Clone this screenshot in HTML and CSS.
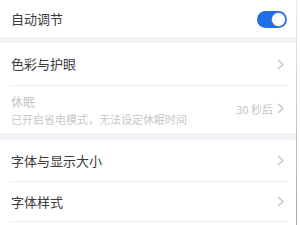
FILE: index.html
```html
<!DOCTYPE html>
<html lang="zh-CN">
<head>
<meta charset="utf-8">
<link rel="stylesheet" href="styles.css">
</head>
<body>
<div class="page">
  <div class="group">
    <div class="row row-top">
      <span class="label">自动调节</span>
      <span class="toggle"><span class="knob"></span></span>
    </div>
  </div>
  <div class="band band-1"></div>
  <div class="group">
    <div class="row row-color">
      <span class="label">色彩与护眼</span>
      <svg class="chev" width="7" height="11" viewBox="0 0 7 11"><path d="M1 1 L6 5.5 L1 10" fill="none" stroke="#c4c4c4" stroke-width="1.3"/></svg>
    </div>
    <div class="row row-sleep">
      <div class="sleep-text">
        <span class="label label-dis">休眠</span>
        <span class="sub">已开启省电模式，无法设定休眠时间</span>
      </div>
      <span class="value">30 秒后
        <svg class="chev" width="7" height="11" viewBox="0 0 7 11"><path d="M1 1 L6 5.5 L1 10" fill="none" stroke="#c4c4c4" stroke-width="1.3"/></svg>
      </span>
    </div>
  </div>
  <div class="band band-2"></div>
  <div class="group">
    <div class="row row-font">
      <span class="label">字体与显示大小</span>
      <svg class="chev" width="7" height="11" viewBox="0 0 7 11"><path d="M1 1 L6 5.5 L1 10" fill="none" stroke="#c4c4c4" stroke-width="1.3"/></svg>
    </div>
    <div class="row row-style">
      <span class="label">字体样式</span>
      <svg class="chev" width="7" height="11" viewBox="0 0 7 11"><path d="M1 1 L6 5.5 L1 10" fill="none" stroke="#c4c4c4" stroke-width="1.3"/></svg>
    </div>
  </div>
</div>
</body>
</html>
```
FILE: styles.css
```css
html, body {
  margin: 0;
  padding: 0;
  background: #ffffff;
}
body {
  width: 300px;
  height: 225px;
  overflow: hidden;
  font-family: "Noto Sans CJK SC", "Noto Sans", sans-serif;
}
.page {
  width: 297px;
  height: 225px;
  box-sizing: border-box;
  border-right: 1px solid #b5b5b5;
  border-image: linear-gradient(#ececec, #a8a8a8) 1;
  background: #fff;
}
.group {
  padding: 0 8px 0 10px;
}
.row {
  display: flex;
  align-items: center;
  justify-content: space-between;
  border-bottom: 1px solid #ececef;
  padding: 0 4px 0 1px;
}
.row-top {
  height: 37px;
  border-bottom: none;
  padding-right: 1px;
}
.row-color { height: 42px; }
.row-sleep { height: 47px; border-bottom: none; }
.row-font { height: 41px; }
.row-style { height: 39px; }
.label {
  font-size: 13px;
  color: #3a3a3a;
  line-height: 16px;
}
.label-dis {
  color: #c4c4c4;
  font-size: 12px;
}
.sleep-text {
  display: flex;
  flex-direction: column;
  gap: 2px;
  padding-top: 1px;
}
.sub {
  font-size: 11px;
  color: #c8c8c8;
  line-height: 15px;
}
.value {
  display: flex;
  align-items: center;
  gap: 4px;
  font-size: 11px;
  color: #c4c4c4;
  margin-bottom: 2px;
}
.chev { display: block; }
.band {
  background: #f4f2f8;
}
.band-1 { height: 6px; }
.band-2 { height: 7px; }
.toggle {
  width: 30px;
  height: 17px;
  border-radius: 9px;
  background: #1d6fe3;
  display: flex;
  align-items: center;
  justify-content: flex-end;
  padding: 0 2px;
  box-sizing: border-box;
  margin-top: 1px;
}
.knob {
  width: 13px;
  height: 13px;
  border-radius: 50%;
  background: #fff;
  box-shadow: 0 0 0 0.5px #9aa3b0;
}
```
